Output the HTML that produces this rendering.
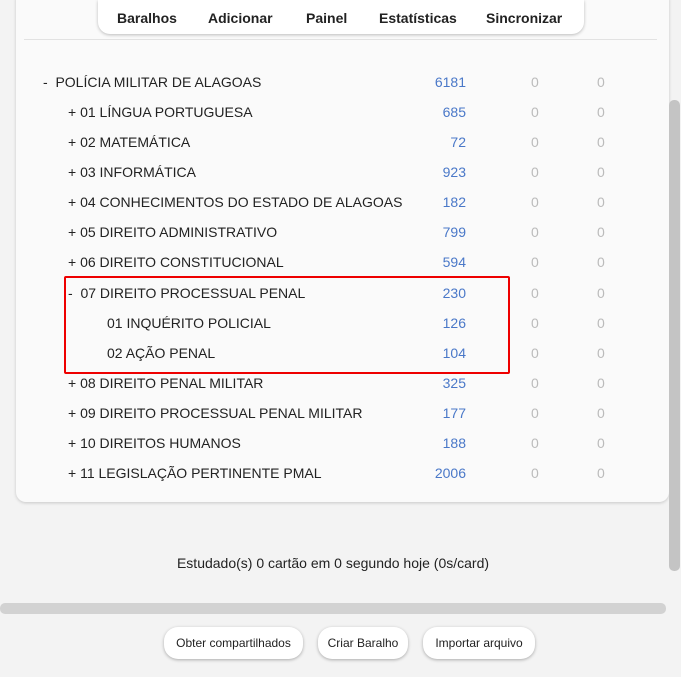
<!DOCTYPE html>
<html><head><meta charset="utf-8"><style>
body{margin:0;width:681px;height:677px;background:#f3f3f3;font-family:"Liberation Sans",sans-serif;position:relative;overflow:hidden;color:#222}
.card{position:absolute;left:16px;top:-10px;width:653px;height:512px;background:#fafafa;border-radius:10px;box-shadow:0 1px 3px rgba(0,0,0,.18)}
.line{position:absolute;left:24px;top:39px;width:633px;height:1px;background:#e2e2e2}
.nav{position:absolute;left:98px;top:0;width:486px;height:34px;background:#fff;border-radius:0 0 12px 12px;box-shadow:0 1px 3px rgba(0,0,0,.25);font-weight:bold;font-size:14px}
.nav span{position:absolute;top:10px}
.row{position:absolute;left:0;height:30px;width:681px;font-size:14px;line-height:31px}
.row .t{position:absolute;white-space:nowrap}
.row .n{position:absolute;right:215px;color:#4a78c8}
.row .z1{position:absolute;left:531px;color:#bbb}
.row .z2{position:absolute;left:597px;color:#bbb}
.box{position:absolute;left:64px;top:276px;width:442px;height:94px;border:2px solid #e00;border-radius:2px}
.vs{position:absolute;left:669px;top:100px;width:11px;height:471px;background:#c4c4c4;border-radius:5px}
.hs{position:absolute;left:0;top:603px;width:666px;height:11px;background:#d2d2d2;border-radius:5px}
.btn{position:absolute;top:627px;height:32px;background:#fff;border-radius:14px;box-shadow:0 1px 3px rgba(0,0,0,.3);font-size:12px;line-height:32px;text-align:center}
.stat{position:absolute;top:555px;left:0;width:666px;text-align:center;font-size:14px}
</style></head><body>
<div class="card"></div>
<div class="line"></div>
<div class="nav"><span style="left:19px">Baralhos</span><span style="left:110px">Adicionar</span><span style="left:208px">Painel</span><span style="left:281px">Estatísticas</span><span style="left:388px">Sincronizar</span></div>
<div class="row" style="top:67px"><span class="t" style="left:43px">-&nbsp; POLÍCIA MILITAR DE ALAGOAS</span><span class="n">6181</span><span class="z1">0</span><span class="z2">0</span></div>
<div class="row" style="top:97px"><span class="t" style="left:68px">+ 01 LÍNGUA PORTUGUESA</span><span class="n">685</span><span class="z1">0</span><span class="z2">0</span></div>
<div class="row" style="top:127px"><span class="t" style="left:68px">+ 02 MATEMÁTICA</span><span class="n">72</span><span class="z1">0</span><span class="z2">0</span></div>
<div class="row" style="top:157px"><span class="t" style="left:68px">+ 03 INFORMÁTICA</span><span class="n">923</span><span class="z1">0</span><span class="z2">0</span></div>
<div class="row" style="top:187px"><span class="t" style="left:68px">+ 04 CONHECIMENTOS DO ESTADO DE ALAGOAS</span><span class="n">182</span><span class="z1">0</span><span class="z2">0</span></div>
<div class="row" style="top:217px"><span class="t" style="left:68px">+ 05 DIREITO ADMINISTRATIVO</span><span class="n">799</span><span class="z1">0</span><span class="z2">0</span></div>
<div class="row" style="top:247px"><span class="t" style="left:68px">+ 06 DIREITO CONSTITUCIONAL</span><span class="n">594</span><span class="z1">0</span><span class="z2">0</span></div>
<div class="row" style="top:278px"><span class="t" style="left:68px">-&nbsp; 07 DIREITO PROCESSUAL PENAL</span><span class="n">230</span><span class="z1">0</span><span class="z2">0</span></div>
<div class="row" style="top:308px"><span class="t" style="left:107px">01 INQUÉRITO POLICIAL</span><span class="n">126</span><span class="z1">0</span><span class="z2">0</span></div>
<div class="row" style="top:338px"><span class="t" style="left:107px">02 AÇÃO PENAL</span><span class="n">104</span><span class="z1">0</span><span class="z2">0</span></div>
<div class="row" style="top:368px"><span class="t" style="left:68px">+ 08 DIREITO PENAL MILITAR</span><span class="n">325</span><span class="z1">0</span><span class="z2">0</span></div>
<div class="row" style="top:398px"><span class="t" style="left:68px">+ 09 DIREITO PROCESSUAL PENAL MILITAR</span><span class="n">177</span><span class="z1">0</span><span class="z2">0</span></div>
<div class="row" style="top:428px"><span class="t" style="left:68px">+ 10 DIREITOS HUMANOS</span><span class="n">188</span><span class="z1">0</span><span class="z2">0</span></div>
<div class="row" style="top:458px"><span class="t" style="left:68px">+ 11 LEGISLAÇÃO PERTINENTE PMAL</span><span class="n">2006</span><span class="z1">0</span><span class="z2">0</span></div>
<div class="box"></div>
<div class="vs"></div>
<div class="stat">Estudado(s) 0 cartão em 0 segundo hoje (0s/card)</div>
<div class="hs"></div>
<div class="btn" style="left:164px;width:139px">Obter compartilhados</div>
<div class="btn" style="left:318px;width:90px">Criar Baralho</div>
<div class="btn" style="left:423px;width:112px">Importar arquivo</div>
</body></html>
